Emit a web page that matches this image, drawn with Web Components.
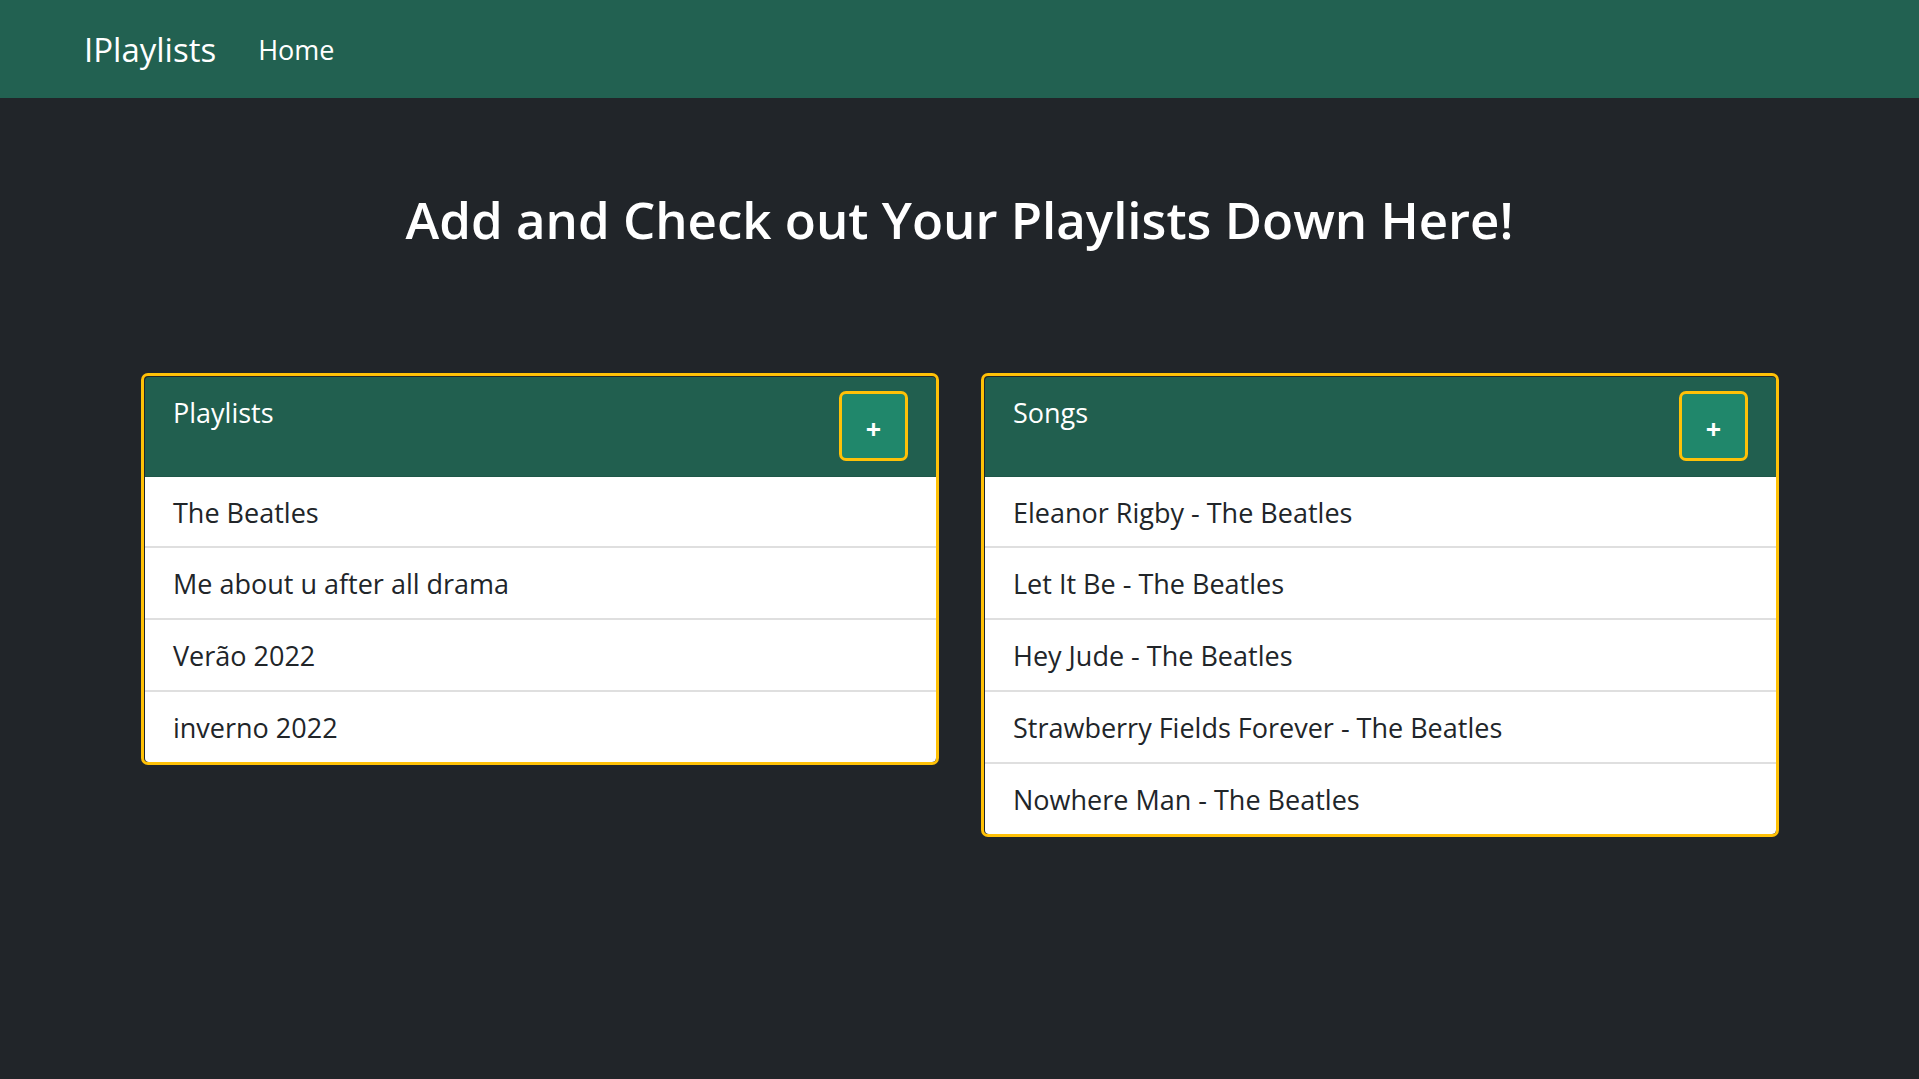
<!DOCTYPE html>
<html lang="en">
<head>
<meta charset="utf-8">
<meta name="viewport" content="width=device-width, initial-scale=1">
<title>IPlaylists</title>
<style>
  body {
    margin: 0;
    min-height: 100vh;
    background: #212529;
    color: #212529;
    font: 27px/42px "Segoe UI", "Open Sans", "Noto Sans", sans-serif;
  }
</style>
</head>
<body>
<playlist-app></playlist-app>

<template id="nav-template">
  <style>
    :host { display: block; background: #226151; }
    nav { display: flex; align-items: center; gap: 42px; min-height: 96px; padding: 2px 84px 0; }
    a { color: #fff; text-decoration: none; line-height: 52px; }
    .brand { font-size: 33px; }
  </style>
  <nav>
    <a class="brand" href="#"><slot name="brand"></slot></a>
    <a href="#"><slot></slot></a>
  </nav>
</template>

<template id="card-template">
  <style>
    :host {
      display: block;
      border: 3px solid #ffc107;
      border-radius: 7px;
      padding: 1px 0 0 1px;
      overflow: hidden;
    }
    header {
      display: flex;
      justify-content: space-between;
      align-items: flex-start;
      padding: 14px 28px 15px;
      background: #215f4f;
      border-bottom: 1px solid #1e5748;
      border-radius: 4px 4px 0 0;
      color: #fff;
    }
    h2 { margin: 0; padding-top: 1px; font: inherit; }
    button {
      box-sizing: border-box;
      width: 69px;
      height: 70px;
      padding: 6px 0 0;
      border: 3px solid #ffc107;
      border-radius: 7px;
      background: #20876b;
      color: #fff;
      font: 700 27px/42px "Segoe UI", "Open Sans", "Noto Sans", sans-serif;
    }
    ul { margin: 0; padding: 0; list-style: none; border-radius: 0 0 4px 4px; background: #fff; }
    li { padding: 15px 28px 13px; }
    li:first-child { padding-bottom: 12px; }
    li + li { border-top: 2px solid #dfdfdf; }
  </style>
  <header>
    <h2></h2>
    <button type="button">+</button>
  </header>
  <ul></ul>
</template>

<template id="app-template">
  <style>
    :host { display: block; }
    h1 {
      margin: 0;
      padding: 84px 28px 117px;
      color: #fff;
      text-align: center;
      font-size: 51px;
      font-weight: 600;
      line-height: 74px;
    }
    main { padding: 0 140px 56px 141px; }
    .columns { display: grid; grid-template-columns: 1fr 1fr; gap: 42px; align-items: start; }
  </style>
  <site-nav><span slot="brand">IPlaylists</span>Home</site-nav>
  <h1>Add and Check out Your Playlists Down Here!</h1>
  <main>
    <div class="columns">
      <list-card heading="Playlists">
        <span>The Beatles</span>
        <span>Me about u after all drama</span>
        <span>Verão 2022</span>
        <span>inverno 2022</span>
      </list-card>
      <list-card heading="Songs">
        <span>Eleanor Rigby - The Beatles</span>
        <span>Let It Be - The Beatles</span>
        <span>Hey Jude - The Beatles</span>
        <span>Strawberry Fields Forever - The Beatles</span>
        <span>Nowhere Man - The Beatles</span>
      </list-card>
    </div>
  </main>
</template>

<script>
  function stamp(host, id) {
    const root = host.attachShadow({ mode: "open" });
    root.append(document.getElementById(id).content.cloneNode(true));
    return root;
  }

  class SiteNav extends HTMLElement {
    connectedCallback() {
      if (!this.shadowRoot) stamp(this, "nav-template");
    }
  }

  class ListCard extends HTMLElement {
    connectedCallback() {
      if (this.shadowRoot) return;
      const root = stamp(this, "card-template");
      const heading = this.getAttribute("heading");
      root.querySelector("h2").textContent = heading;
      root.querySelector("button").setAttribute("aria-label", "Add to " + heading);
      // Each child becomes one row of the list through its own named slot.
      const list = root.querySelector("ul");
      [...this.children].forEach((child, index) => {
        child.slot = "row-" + index;
        const row = document.createElement("li");
        const slot = document.createElement("slot");
        slot.name = child.slot;
        row.append(slot);
        list.append(row);
      });
    }
  }

  class PlaylistApp extends HTMLElement {
    connectedCallback() {
      if (!this.shadowRoot) stamp(this, "app-template");
    }
  }

  customElements.define("site-nav", SiteNav);
  customElements.define("list-card", ListCard);
  customElements.define("playlist-app", PlaylistApp);
</script>
</body>
</html>
